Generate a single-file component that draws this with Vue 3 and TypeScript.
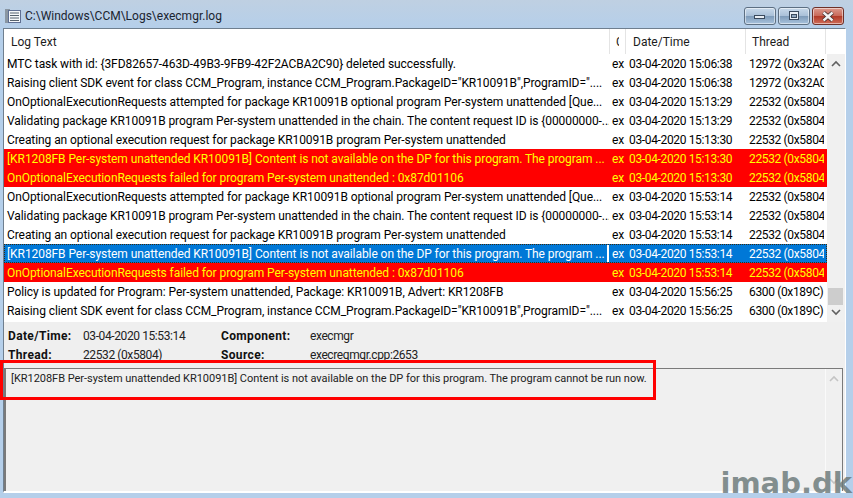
<script setup lang="ts">
interface Row { text: string; date: string; thread: string; kind?: 'err' | 'sel' }
const a = '22532 (0x5804)'
const b = '6300 (0x189C)'
const c = '12972 (0x32AC)'
const sdk = 'Raising client SDK event for class CCM_Program, instance CCM_Program.PackageID="KR10091B",ProgramID="....'
const att = 'OnOptionalExecutionRequests attempted for package KR10091B optional program Per-system unattended [Que...'
const val = 'Validating package KR10091B program Per-system unattended in the chain. The content request ID is {00000000-...'
const cre = 'Creating an optional execution request for package KR10091B program Per-system unattended'
const na = '[KR1208FB Per-system unattended KR10091B] Content is not available on the DP for this program. The program ...'
const fail = 'OnOptionalExecutionRequests failed for program Per-system unattended : 0x87d01106'
const rows: Row[] = [
  { text: 'MTC task with id: {3FD82657-463D-49B3-9FB9-42F2ACBA2C90} deleted successfully.', date: '03-04-2020 15:06:38', thread: c },
  { text: sdk, date: '03-04-2020 15:06:38', thread: c },
  { text: att, date: '03-04-2020 15:13:29', thread: a },
  { text: val, date: '03-04-2020 15:13:29', thread: a },
  { text: cre, date: '03-04-2020 15:13:30', thread: a },
  { text: na, date: '03-04-2020 15:13:30', thread: a, kind: 'err' },
  { text: fail, date: '03-04-2020 15:13:30', thread: a, kind: 'err' },
  { text: att, date: '03-04-2020 15:53:14', thread: a },
  { text: val, date: '03-04-2020 15:53:14', thread: a },
  { text: cre, date: '03-04-2020 15:53:14', thread: a },
  { text: na, date: '03-04-2020 15:53:14', thread: a, kind: 'sel' },
  { text: fail, date: '03-04-2020 15:53:14', thread: a, kind: 'err' },
  { text: 'Policy is updated for Program: Per-system unattended, Package: KR10091B, Advert: KR1208FB', date: '03-04-2020 15:56:25', thread: b },
  { text: sdk, date: '03-04-2020 15:56:25', thread: b }
]
</script>

<template>
  <div class="win">
    <header class="titlebar">
      <svg class="appicon" width="16" height="16" viewBox="0 0 16 16">
        <rect x="0" y="1" width="5" height="14" fill="#8a96a2" />
        <rect x="3.500" y="2.500" width="12" height="12" fill="#f6f8fa" stroke="#5f6f92" />
        <path d="M5 5h9M5 7.500h9M5 10h9M5 12.500h9" stroke="#56626e" stroke-width="1" />
      </svg>
      <span class="title">C:\Windows\CCM\Logs\execmgr.log</span>
      <div class="controls">
        <button class="ctl">
          <svg width="12" height="8" viewBox="0 0 12 8"><rect x="0.500" y="3.500" width="10" height="3" fill="#e8eef4" stroke="#39495c" /></svg>
        </button>
        <button class="ctl">
          <svg width="12" height="10" viewBox="0 0 12 10"><rect x="1.500" y="0.500" width="9" height="8" fill="#e8eef4" stroke="#39495c" /><rect x="3.500" y="3.500" width="5" height="3" fill="#8fa6be" stroke="#39495c" /></svg>
        </button>
        <button class="ctl close">
          <svg width="16" height="11" viewBox="0 0 16 11"><path d="M3.500 1.500 12.500 9.500M12.500 1.500 3.500 9.500" stroke="#3a2a2a" stroke-width="4" /><path d="M3.500 1.500 12.500 9.500M12.500 1.500 3.500 9.500" stroke="#f2f2f2" stroke-width="2.400" /></svg>
        </button>
      </div>
    </header>

    <main class="client">
      <section class="listwrap">
        <div class="list">
          <div class="head">
            <div class="hc c-text">Log Text</div>
            <div class="hc c-comp"><span class="clipc">C</span></div>
            <div class="hc c-date">Date/Time</div>
            <div class="hc c-thread">Thread</div>
          </div>
          <div v-for="(r, i) in rows" :key="i" class="row" :class="r.kind">
            <div class="cell c-text">{{ r.text }}</div>
            <div class="cell c-comp">ex</div>
            <div class="cell c-date">{{ r.date }}</div>
            <div class="cell c-thread">{{ r.thread }}</div>
          </div>
        </div>
        <div class="scroll">
          <div class="scrollhead"></div>
          <svg class="arrow up" width="10" height="7" viewBox="0 0 10 7"><path d="M1 6 5 2l4 4" fill="none" stroke="#606060" stroke-width="1.600" /></svg>
          <div class="track"><div class="thumb"></div></div>
          <svg class="arrow down" width="10" height="7" viewBox="0 0 10 7"><path d="M1 1l4 4 4-4" fill="none" stroke="#606060" stroke-width="1.600" /></svg>
        </div>
      </section>

      <section class="details">
        <div class="dl">Date/Time:</div><div class="dv">03-04-2020 15:53:14</div>
        <div class="dl">Component:</div><div class="dv">execmgr</div>
        <div class="dl">Thread:</div><div class="dv">22532 (0x5804)</div>
        <div class="dl">Source:</div><div class="dv">execreqmgr.cpp:2653</div>
      </section>

      <section class="message">
        <div class="msgtext">[KR1208FB Per-system unattended KR10091B] Content is not available on the DP for this program. The program cannot be run now.</div>
        <div class="msgscroll">
          <svg width="10" height="7" viewBox="0 0 10 7"><path d="M1 6 5 2l4 4" fill="none" stroke="#c4c4c4" stroke-width="1.600" /></svg>
          <svg width="10" height="7" viewBox="0 0 10 7"><path d="M1 1l4 4 4-4" fill="none" stroke="#c4c4c4" stroke-width="1.600" /></svg>
        </div>
      </section>
    </main>

    <div class="callout"></div>
    <div class="mark">imab.dk</div>
  </div>
</template>

<style>
html, body { margin: 0; background: #b5cfea; }
</style>

<style scoped>
.win {
  position: relative;
  width: 853px;
  height: 498px;
  overflow: hidden;
  display: flex;
  flex-direction: column;
  background: linear-gradient(#bfd0e2 0, #b5cfea 28px);
  font-family: "Roboto", sans-serif;
  font-size: 12px;
  color: #000;
}
.titlebar {
  height: 28px;
  flex: none;
  display: flex;
  align-items: center;
  padding: 4px 9px 0 5px;
  box-sizing: border-box;
}
.appicon { flex: none; margin-right: 4px; }
.title { color: #1a2430; font-size: 12px; }
.controls { margin-left: auto; display: flex; gap: 2px; align-self: flex-start; padding-top: 3px; }
.ctl {
  width: 32px;
  height: 18px;
  padding: 0;
  display: flex;
  align-items: center;
  justify-content: center;
  border: 1px solid #5d6f82;
  border-radius: 3px;
  background: linear-gradient(#c8d9ea 0, #a9c0d8 50%, #7f9cba 52%, #a8c2dc 100%);
  box-shadow: inset 0 0 0 1px rgba(255,255,255,.5);
}
.ctl.close {
  border-color: #6e3028;
  background: linear-gradient(#dc9a8e 0, #c96a5a 48%, #b23a28 52%, #cf6c58 100%);
}
.client {
  flex: none;
  height: 465px;
  margin: 0 7px 0 3px;
  box-sizing: border-box;
  border: 1px solid #6f7f8f;
  border-width: 1px 0 0 1px;
  background: #efefef;
  display: flex;
  flex-direction: column;
  border-bottom: 2px solid #fff;
  border-right: 1px solid #fff;
}
.listwrap { flex: none; height: 293px; display: flex; }
.list { width: 823px; flex: none; background: #fff; overflow: hidden; }
.head { height: 25px; display: flex; background: #fff; }
.hc {
  box-sizing: border-box;
  height: 25px;
  line-height: 27px;
  border-right: 1px solid #e4e4e4;
  color: #1c1c1c;
  overflow: hidden;
  white-space: nowrap;
}
.hc.c-text { padding-left: 7px; width: 606px; }
.hc.c-comp { padding-left: 6px; width: 16px; }
.clipc { display: inline-block; width: 3px; overflow: hidden; vertical-align: top; }
.hc.c-date { padding-left: 7px; }
.hc.c-thread { padding-left: 6px; width: 80px; }
.c-text { width: 605px; flex: none; }
.c-comp { width: 17px; flex: none; }
.c-date { width: 120px; flex: none; }
.c-thread { width: 78px; flex: none; }
.row { display: flex; height: 19px; line-height: 21px; box-sizing: border-box; }
.cell { overflow: hidden; white-space: nowrap; box-sizing: border-box; padding-left: 3px; height: 19px; }
.cell.c-text { letter-spacing: -.075px; }
.cell.c-date { letter-spacing: -.35px; }
.cell.c-thread { letter-spacing: -.35px; }
.row.err { background: #ff0000; color: #ffff00; }
.row.sel { background: #0078d7; color: #fff; outline: 1px dotted #3a2a10; outline-offset: -1px; }
.row.sel .c-text { border-right: 2px solid #fff; height: 17px; margin-top: 1px; line-height: 19px; }
.scroll { flex: 1; display: flex; flex-direction: column; align-items: center; background: #f0f0f0; }
.scrollhead { height: 25px; width: 100%; flex: none; background: #fff; }
.arrow { flex: none; }
.arrow.up { margin: 6px 0; }
.arrow.down { margin: 4px 0 6px; }
.track { flex: 1; width: 100%; display: flex; flex-direction: column; justify-content: flex-end; box-sizing: border-box; }
.thumb { width: 15px; height: 17px; background: #cdcdcd; margin-left: 1px; }
.details {
  flex: none;
  height: 46px;
  box-sizing: border-box;
  padding: 4px 0 0 4px;
  display: grid;
  grid-template-columns: 75px 138px 89px 1fr;
  grid-auto-rows: 19px;
  align-items: center;
  overflow: hidden;
}
.dl { font-weight: 700; color: #111; letter-spacing: .35px; }
.dv { color: #222; letter-spacing: -.4px; }
.message {
  flex: 1;
  display: flex;
  border-top: 1px solid #7a7a7a;
  border-left: 2px solid #7a7a7a;
  border-right: 1px solid #7a7a7a;
  background: #f0f0f0;
  margin-right: 2px;
}
.msgtext { flex: 1; padding: 1px 0 0 5px; line-height: 17px; color: #222; font-size: 11px; letter-spacing: -.03px; }
.msgscroll {
  width: 17px;
  flex: none;
  border-left: 1px solid #fafafa;
  display: flex;
  flex-direction: column;
  align-items: center;
  justify-content: space-between;
  padding: 6px 0;
  box-sizing: border-box;
}
.callout {
  position: absolute;
  left: 0;
  top: 360px;
  width: 656px;
  height: 40px;
  box-sizing: border-box;
  border: 3px solid #ff0000;
  pointer-events: none;
}
.mark {
  position: absolute;
  right: 1px;
  bottom: -2px;
  font-family: "DejaVu Sans", sans-serif;
  font-weight: 700;
  font-size: 29px;
  line-height: 34px;
  color: rgba(105, 120, 120, .82);
}
</style>
